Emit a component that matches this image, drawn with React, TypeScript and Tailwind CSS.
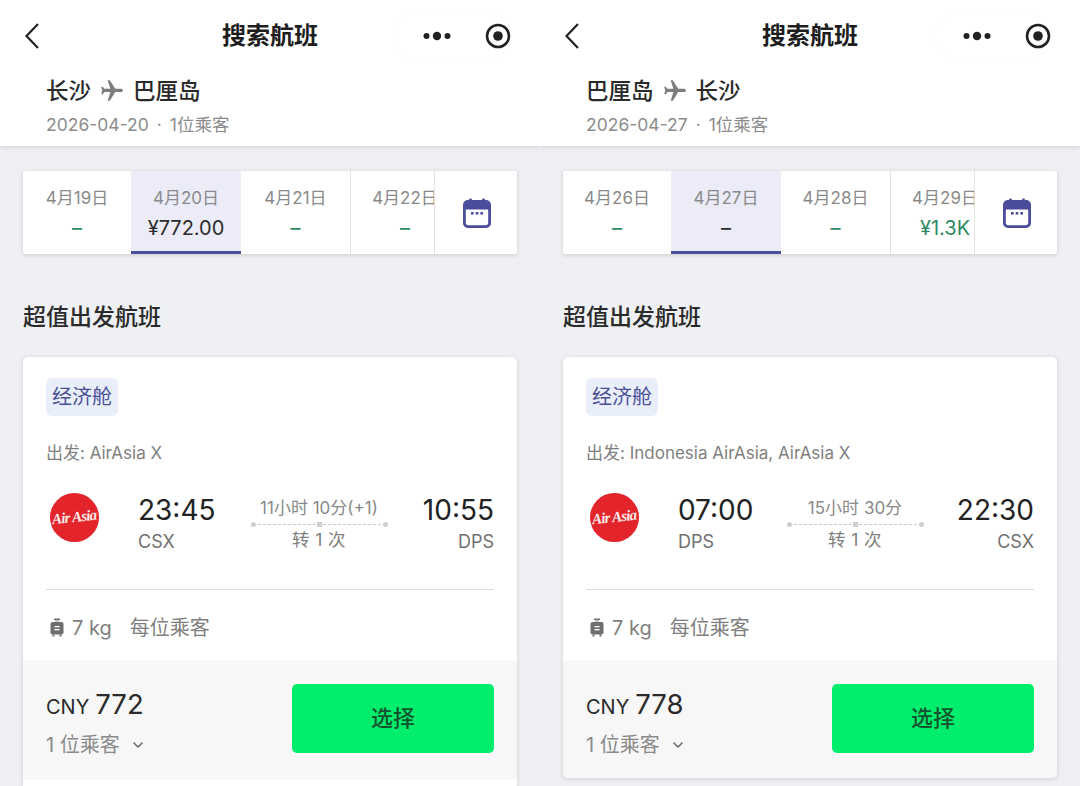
import React from 'react';
import { ChevronDown } from 'lucide-react';

type DateCell = { label: string; price: string; tone?: 'green' | 'dark' };

type PhoneData = {
  from: string;
  to: string;
  date: string;
  dates: DateCell[];
  airline: string;
  departTime: string;
  departCode: string;
  departWidth: string;
  duration: string;
  arriveTime: string;
  arriveCode: string;
  price: string;
  cardContinues?: boolean;
};

const phones: PhoneData[] = [
  {
    from: '长沙',
    to: '巴厘岛',
    date: '2026-04-20',
    dates: [
      { label: '4月19日', price: '–' },
      { label: '4月20日', price: '¥772.00', tone: 'dark' },
      { label: '4月21日', price: '–' },
      { label: '4月22日', price: '–' },
    ],
    airline: '出发: AirAsia X',
    departTime: '23:45',
    departCode: 'CSX',
    departWidth: 'w-[106px]',
    duration: '11小时 10分(+1)',
    arriveTime: '10:55',
    arriveCode: 'DPS',
    price: '772',
    cardContinues: true,
  },
  {
    from: '巴厘岛',
    to: '长沙',
    date: '2026-04-27',
    dates: [
      { label: '4月26日', price: '–' },
      { label: '4月27日', price: '–', tone: 'dark' },
      { label: '4月28日', price: '–' },
      { label: '4月29日', price: '¥1.3K' },
    ],
    airline: '出发: Indonesia AirAsia, AirAsia X',
    departTime: '07:00',
    departCode: 'DPS',
    departWidth: 'w-[102px]',
    duration: '15小时 30分',
    arriveTime: '22:30',
    arriveCode: 'CSX',
    price: '778',
  },
];

const cellWidths = ['w-[108px]', 'w-[110px]', 'w-[109px]', 'w-[109px]'];

const BackIcon = () => (
  <svg width="16" height="28" viewBox="0 0 16 28" fill="none">
    <path d="M14 2 L2.5 14 L14 26" stroke="#222" strokeWidth="2.2" />
  </svg>
);

const CapsuleMenu = () => (
  <div className="flex h-[44px] w-[120px] items-center justify-between rounded-full border border-[#fcfcfc] pl-[30px] pr-[0px]">
    <svg width="28" height="10" viewBox="0 0 28 10" fill="#222">
      <circle cx="3.5" cy="5" r="3" />
      <circle cx="14" cy="5" r="4.2" />
      <circle cx="24.5" cy="5" r="3" />
    </svg>
    <svg width="26" height="26" viewBox="0 0 26 26" fill="none">
      <circle cx="13" cy="13" r="11" stroke="#222" strokeWidth="2.6" />
      <circle cx="13" cy="13" r="4.8" fill="#222" />
    </svg>
  </div>
);

const PlaneIcon = () => (
  <svg width="26" height="26" viewBox="0 0 24 24" fill="#7d7d7d" className="rotate-90">
    <path d="M21 16v-2l-8-5V3.5c0-.83-.67-1.5-1.5-1.5S10 2.67 10 3.5V9l-8 5v2l8-2.5V19l-2 1.5V22l3.5-1 3.5 1v-1.5L13 19v-5.5l8 2.5z" />
  </svg>
);

const CalendarIcon = () => (
  <svg width="28" height="30" viewBox="0 0 28 30">
    <rect x="6" y="0.5" width="3" height="5" rx="1.2" fill="#4a4d9c" />
    <rect x="19" y="0.5" width="3" height="5" rx="1.2" fill="#4a4d9c" />
    <rect x="1.4" y="3.4" width="25.2" height="25.2" rx="3.5" fill="#fff" stroke="#4a4d9c" strokeWidth="2.8" />
    <path d="M1 7 a4 4 0 0 1 4-4 h18 a4 4 0 0 1 4 4 v4.5 h-26 z" fill="#4a4d9c" />
    <rect x="8" y="14" width="2.6" height="2.6" fill="#4a4d9c" />
    <rect x="12.7" y="14" width="2.6" height="2.6" fill="#4a4d9c" />
    <rect x="17.4" y="14" width="2.6" height="2.6" fill="#4a4d9c" />
  </svg>
);

const LuggageIcon = () => (
  <svg width="16" height="20" viewBox="0 0 16 20" fill="#6e6e6e">
    <path d="M5 0.5h6v1.4H9.4V4H8.6V1.9h-1.2V4H6.6V1.9H5z" />
    <rect x="1.5" y="4" width="13" height="12.5" rx="2" />
    <rect x="3.5" y="16.5" width="2" height="2" />
    <rect x="10.5" y="16.5" width="2" height="2" />
    <rect x="5.5" y="8" width="5" height="1.3" fill="#fff" />
    <rect x="5.5" y="11" width="5" height="1.3" fill="#fff" />
  </svg>
);

const AirAsiaLogo = () => (
  <div className="flex h-[49px] w-[49px] items-center justify-center rounded-full bg-[#e3242b]">
    <span className="-rotate-6 whitespace-nowrap text-[15px] font-bold italic leading-none tracking-[-0.8px] text-[#fdeaea] [font-family:'Liberation_Serif',serif]">
      Air Asia
    </span>
  </div>
);

const Phone = ({ data }: { data: PhoneData }) => (
  <div className="h-[786px] w-[540px] shrink-0 overflow-hidden bg-[#eef0f3]">
    <div className="h-[146px] bg-white shadow-[0_1px_5px_rgba(0,0,0,0.14)]">
      <div className="grid h-[72px] grid-cols-[1fr_auto_1fr] items-center">
        <div className="pl-[24px]">
          <BackIcon />
        </div>
        <div className="text-[24px] font-bold text-[#1d1d1d]">搜索航班</div>
        <div className="flex justify-end pr-[28px]">
          <CapsuleMenu />
        </div>
      </div>
      <div className="pl-[46px]">
        <div className="flex h-[38px] items-center gap-[8px] text-[22.5px] font-medium text-[#2a2a2a]">
          <span>{data.from}</span>
          <PlaneIcon />
          <span>{data.to}</span>
        </div>
        <div className="mt-[2px] flex text-[17.5px] leading-[26px] text-[#8c8c8c]">
          <span>{data.date}</span>
          <span className="mx-[8px]">·</span>
          <span>1位乘客</span>
        </div>
      </div>
    </div>

    <div className="px-[23px] pt-[25px]">
      <div className="flex h-[83px] rounded-[2px] bg-white shadow-[0_1px_4px_rgba(0,0,0,0.16)]">
        <div className="flex w-[411px] overflow-hidden">
          {data.dates.map((d, i) => {
            const selected = i === 1;
            return (
              <div
                key={d.label}
                className={`${cellWidths[i]} flex h-full shrink-0 flex-col items-center ${
                  selected ? 'border-b-[3px] border-[#4c4f9e] bg-[#ebecf8]' : ''
                } ${i === 3 ? 'border-l border-[#e2e2e2]' : ''}`}
              >
                <div className="mt-[15px] text-[17px] leading-[24px] text-[#8a8a8a]">{d.label}</div>
                <div
                  className={`mt-[3px] text-[20px] leading-[30px] ${
                    d.tone === 'dark' ? 'text-[#2b2b2b]' : 'text-[#2f8a63]'
                  }`}
                >
                  {d.price}
                </div>
              </div>
            );
          })}
        </div>
        <div className="flex flex-1 items-center justify-center border-l border-[#e2e2e2] pl-[1px]">
          <CalendarIcon />
        </div>
      </div>

      <div className="mt-[47px] text-[23px] font-medium leading-[32px] text-[#2a2a2a]">超值出发航班</div>

      <div
        className={`mt-[24px] overflow-hidden bg-white shadow-[0_1px_5px_rgba(0,0,0,0.14)] ${
          data.cardContinues ? 'h-[460px] rounded-t-[5px]' : 'h-[421px] rounded-[5px]'
        }`}
      >
        <div className="px-[23px] pt-[21px]">
          <div className="flex h-[38px] w-[72px] items-center justify-center rounded-[6px] bg-[#e9effa] text-[20px] text-[#4b5096]">
            经济舱
          </div>
          <div className="mt-[25px] text-[17px] leading-[24px] text-[#7f7f7f]">{data.airline}</div>

          <div className="mt-[27px] flex h-[64px] items-start">
            <div className="ml-[4px] mt-[1px] w-[88px] shrink-0">
              <AirAsiaLogo />
            </div>
            <div className={`-mt-[1px] ${data.departWidth} shrink-0`}>
              <div className="text-[28px] leading-[38px] text-[#222]">{data.departTime}</div>
              <div className="text-[18px] leading-[26px] text-[#707070]">{data.departCode}</div>
            </div>
            <div className="mt-[4px] flex w-[150px] shrink-0 flex-col items-center">
              <div className="whitespace-nowrap text-[17px] leading-[24px] text-[#8a8a8a]">{data.duration}</div>
              <div className="relative mb-[3px] mt-[4px] h-0 w-[133px] border-t border-dashed border-[#c9c9c9]">
                <span className="absolute -left-[2px] -top-[3px] h-[5px] w-[5px] rounded-full bg-[#cfcfcf]" />
                <span className="absolute left-[64px] -top-[3px] h-[5px] w-[5px] bg-[#cfcfcf]" />
                <span className="absolute -right-[2px] -top-[3px] h-[5px] w-[5px] rounded-full bg-[#cfcfcf]" />
              </div>
              <div className="text-[17.5px] leading-[24px] tracking-[0.4px] text-[#7f7f7f]">转 1 次</div>
            </div>
            <div className="-mt-[1px] flex-1 text-right">
              <div className="text-[28px] leading-[38px] text-[#222]">{data.arriveTime}</div>
              <div className="text-[18px] leading-[26px] text-[#707070]">{data.arriveCode}</div>
            </div>
          </div>

          <div className="mt-[33px] border-t border-[#dcdcdc]" />

          <div className="mt-[23px] flex h-[30px] items-center text-[20px] text-[#7f7f7f]">
            <span className="ml-[3px]">
              <LuggageIcon />
            </span>
            <span className="ml-[7px]">7 kg</span>
            <span className="ml-[18px]">每位乘客</span>
          </div>
        </div>

        <div className="mt-[17px] flex h-[120px] items-start justify-between bg-[#f7f7f8] pl-[23px] pr-[23px] pt-[24px]">
          <div>
            <div className="flex h-[42px] items-baseline text-[#2a2a2a]">
              <span className="text-[20px]">CNY</span>
              <span className="ml-[6px] text-[27.5px]">{data.price}</span>
            </div>
            <div className="mt-[3px] flex items-center text-[20px] leading-[32px] text-[#8a8a8a]">
              <span>1 位乘客</span>
              <ChevronDown size={16} strokeWidth={2.2} className="ml-[10px] text-[#666]" />
            </div>
          </div>
          <div className="flex h-[69px] w-[202px] items-center justify-center rounded-[5px] bg-[#00ee6b] text-[22px] font-medium text-[#14532f]">
            选择
          </div>
        </div>
      </div>
    </div>
  </div>
);

const App: React.FC = () => (
  <div className="flex h-[786px] w-[1080px] overflow-hidden [font-family:Inter,'Noto_Sans_CJK_SC',sans-serif]">
    {phones.map(p => (
      <Phone key={p.date} data={p} />
    ))}
  </div>
);

export default App;
